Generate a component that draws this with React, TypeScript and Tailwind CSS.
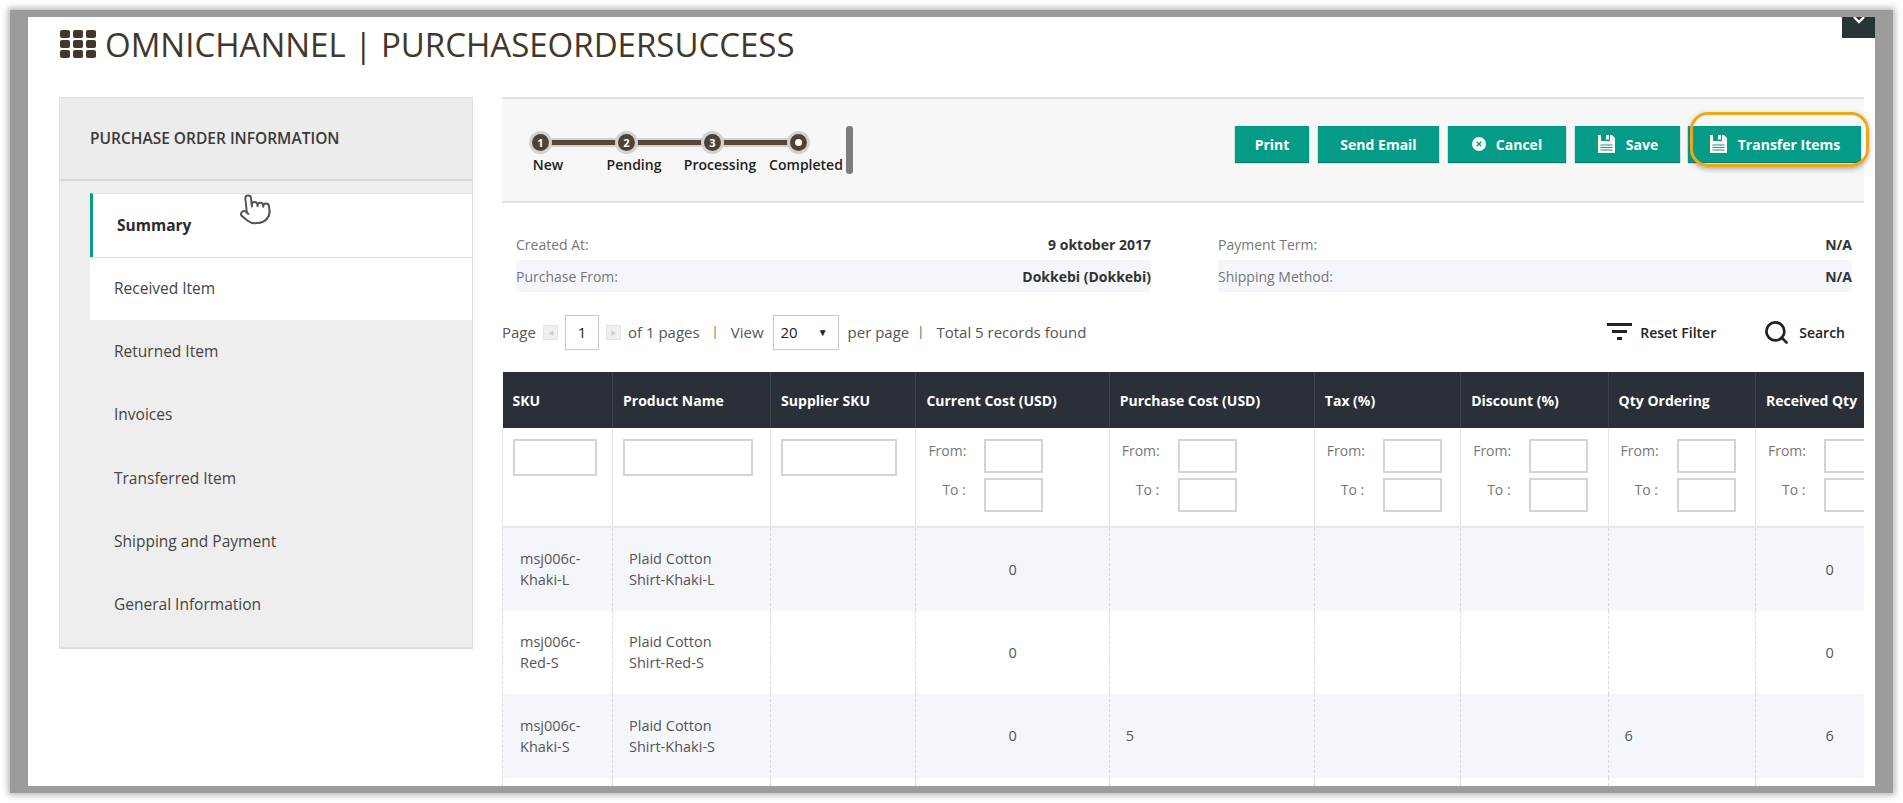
import { Pointer, Search } from 'lucide-react'

const menu = ['Received Item', 'Returned Item', 'Invoices', 'Transferred Item', 'Shipping and Payment', 'General Information']

const steps = ['New', 'Pending', 'Processing', 'Completed']

const columns = [
  { title: 'SKU', width: 103, filter: 'text', inputWidth: 'w-[84px]' },
  { title: 'Product Name', width: 148, filter: 'text', inputWidth: 'w-[130px]' },
  { title: 'Supplier SKU', width: 136, filter: 'text', inputWidth: 'w-[116px]' },
  { title: 'Current Cost (USD)', width: 181, filter: 'range' },
  { title: 'Purchase Cost (USD)', width: 192, filter: 'range' },
  { title: 'Tax (%)', width: 137, filter: 'range' },
  { title: 'Discount (%)', width: 138, filter: 'range' },
  { title: 'Qty Ordering', width: 138, filter: 'range' },
  { title: 'Received Qty', width: 139, filter: 'range' },
  { title: 'Returned Qty', width: 139, filter: 'range' },
]

const rows = [
  { sku: ['msj006c-', 'Khaki-L'], name: ['Plaid Cotton', 'Shirt-Khaki-L'], current: '0', purchase: '', qty: '', received: '0' },
  { sku: ['msj006c-', 'Red-S'], name: ['Plaid Cotton', 'Shirt-Red-S'], current: '0', purchase: '', qty: '', received: '0' },
  { sku: ['msj006c-', 'Khaki-S'], name: ['Plaid Cotton', 'Shirt-Khaki-S'], current: '0', purchase: '5', qty: '6', received: '6' },
]

function SaveIcon() {
  return (
    <svg width="19" height="20" viewBox="0 0 19 20" fill="none">
      <path d="M1 1h3v6h9V1h2l3 3v15H1z" fill="#fff" />
      <rect x="9" y="1" width="3" height="4.5" fill="#fff" />
      <path d="M3.5 11h12M3.5 13.5h12M3.5 16h12" stroke="#049c86" strokeWidth="1.2" />
    </svg>
  )
}

function CancelIcon() {
  return (
    <svg width="14" height="14" viewBox="0 0 14 14">
      <circle cx="7" cy="7" r="7" fill="#fff" />
      <path d="M4.8 4.8l4.4 4.4M9.2 4.8l-4.4 4.4" stroke="#049c86" strokeWidth="1.4" />
    </svg>
  )
}

function Btn({ children, className }: { children: React.ReactNode; className: string }) {
  return (
    <button className={`h-[36px] bg-[#049c86] text-white text-[14px] font-bold flex items-center justify-center shadow-[0_1px_1px_#0b7c6c] ${className}`}>
      {children}
    </button>
  )
}

function PageArrow({ dir }: { dir: 'left' | 'right' }) {
  return (
    <span className="w-[15px] h-[15px] bg-[#efefef] border border-[#e4e4e4] flex items-center justify-center">
      <span className={`text-[7px] leading-none text-[#cfcfcf] ${dir === 'left' ? '' : ''}`}>{dir === 'left' ? '◀' : '▶'}</span>
    </span>
  )
}

function RangeFilter() {
  return (
    <div className="grid grid-cols-[56px_59px] gap-y-[5px] pl-[12px] pt-[11px] text-[14px] text-[#777]">
      <span className="leading-[24px]">From:</span>
      <input className="w-[59px] h-[34px] border-2 border-[#d3d4d8] bg-white" readOnly />
      <span className="leading-[24px] pl-[14px] pt-[-2px]">To :</span>
      <input className="w-[59px] h-[34px] border-2 border-[#d3d4d8] bg-white" readOnly />
    </div>
  )
}

export default function App() {
  return (
    <div className="w-[1903px] h-[803px] bg-white pt-[10px] pl-[10px] overflow-hidden font-['Open_Sans',sans-serif]">
      <div className="relative w-[1883px] h-[783px] bg-white border-x-[18px] border-y-[7px] border-[#9c9c9c] shadow-[0_0_6px_2px_rgba(120,120,120,0.55)] overflow-hidden">
        <div className="absolute right-0 top-0 w-[33px] h-[21px] bg-[#263535] flex justify-center">
          <svg width="14" height="9" viewBox="0 0 14 9" fill="none">
            <path d="M2 0l5 5 5-5" stroke="#fff" strokeWidth="2.4" />
          </svg>
        </div>

        <div className="h-[80px] pl-[32px] pt-[6px] flex items-start gap-[9px]">
          <svg width="36" height="28" viewBox="0 0 36 28" className="mt-[7px]" fill="#41382b">
            <rect x="0" y="0" width="10" height="8" rx="2" />
            <rect x="13" y="0" width="10" height="8" rx="2" />
            <rect x="26" y="0" width="10" height="8" rx="2" />
            <rect x="0" y="10" width="10" height="8" rx="2" />
            <rect x="13" y="10" width="10" height="8" rx="2" />
            <rect x="26" y="10" width="10" height="8" rx="2" />
            <rect x="0" y="20" width="10" height="8" rx="2" />
            <rect x="13" y="20" width="10" height="8" rx="2" />
            <rect x="26" y="20" width="10" height="8" rx="2" />
          </svg>
          <h1 className="text-[33px] leading-[44px] text-[#41382b] font-normal whitespace-nowrap">OMNICHANNEL | PURCHASEORDERSUCCESS</h1>
        </div>

        <div className="flex pl-[31px]">
          <aside className="relative w-[414px] h-[552px] shrink-0 bg-[#eeeeee] border border-[#dcdfe4] border-b-2">
            <div className="h-[83px] bg-[#ececec] border-b-2 border-[#d6d6d6] pl-[30px] flex items-center text-[15.5px] font-semibold text-[#3a3a3a]">
              PURCHASE ORDER INFORMATION
            </div>
            <div className="h-[12px]" />
            <div className="ml-[30px]">
              <div className="h-[64px] bg-white border-l-[3px] border-[#049c86] border-t border-t-[#dcdfe4] pl-[24px] flex items-center text-[15.5px] font-bold text-[#2b2b2b]">
                Summary
              </div>
              {menu.map((item, i) => (
                <div
                  key={item}
                  className={`h-[63.2px] pl-[24px] flex items-center text-[15.5px] text-[#444] ${i === 0 ? 'bg-white border-t border-[#dcdfe4]' : ''}`}
                >
                  {item}
                </div>
              ))}
            </div>
            <Pointer size={34} strokeWidth={1.4} className="absolute left-[178px] top-[94px] text-[#555] fill-white -rotate-6" />
          </aside>

          <main className="w-[1362px] ml-[29px] shrink-0 overflow-hidden">
            <div className="h-[106px] bg-[#f7f7f7] border-y-2 border-[#e2e2e6] flex items-start">
              <div className="w-[346px] pt-[32px] pl-[3px] shrink-0 relative">
                <div className="flex items-center pl-[27px] h-[22px]">
                  {steps.map((s, i) => (
                    <div key={s} className="flex items-center">
                      <span className="w-[17px] h-[17px] rounded-full bg-[#4f4238] ring-[3px] ring-[#d2d2d2] text-white text-[11px] font-bold leading-none flex items-center justify-center z-10">
                        {i < 3 ? i + 1 : <span className="w-[7px] h-[7px] rounded-full bg-white" />}
                      </span>
                      {i < 3 && <span className="w-[69px] h-[5px] bg-[#52463d] shadow-[0_0_0_2px_#d2d2d2]" />}
                    </div>
                  ))}
                </div>
                <div className="grid grid-cols-[86px_86px_86px_86px] text-[14px] font-semibold text-[#222] text-center whitespace-nowrap mt-[1px]">
                  {steps.map((s) => (
                    <span key={s}>{s}</span>
                  ))}
                </div>
                <span className="absolute left-[344px] top-[27px] w-[7px] h-[48px] rounded-[3px] bg-[#7d7d7d]" />
              </div>

              <div className="flex-1 flex justify-end items-start gap-[9px] pt-[27px] pr-[3px] relative">
                <Btn className="w-[74px]">Print</Btn>
                <Btn className="w-[121px]">Send Email</Btn>
                <Btn className="w-[118px] gap-[10px]">
                  <CancelIcon />
                  Cancel
                </Btn>
                <Btn className="w-[105px] gap-[10px]">
                  <SaveIcon />
                  Save
                </Btn>
                <Btn className="w-[173px] gap-[10px] -ml-[1px]">
                  <SaveIcon />
                  Transfer Items
                </Btn>
              </div>
            </div>

            <div className="h-[25px]" />
            <div className="grid grid-cols-[635px_634px] gap-x-[67px] pl-[14px] text-[14px]">
              {[
                [['Created At:', '9 oktober 2017'], ['Payment Term:', 'N/A']],
                [['Purchase From:', 'Dokkebi (Dokkebi)'], ['Shipping Method:', 'N/A']],
              ].flatMap((pair, r) =>
                pair.map(([label, value]) => (
                  <div key={label} className={`h-[32px] flex items-center justify-between ${r === 1 ? 'bg-[#f4f6fb]' : ''}`}>
                    <span className="text-[#777]">{label}</span>
                    <span className="font-bold text-[#333]">{value}</span>
                  </div>
                )),
              )}
            </div>

            <div className="h-[80px] flex items-center text-[15px] text-[#555] pt-[-2px]">
              <span>Page</span>
              <span className="ml-[7px]"><PageArrow dir="left" /></span>
              <input readOnly value="1" className="ml-[7px] w-[34px] h-[35px] border border-[#c9c9cf] text-center text-[15px] text-[#222]" />
              <span className="ml-[7px]"><PageArrow dir="right" /></span>
              <span className="ml-[7px]">of 1 pages</span>
              <span className="ml-[12px] text-[#b5533a] text-[13px]">|</span>
              <span className="ml-[12px]">View</span>
              <span className="ml-[9px] relative">
                <select className="appearance-none w-[66px] h-[35px] border border-[#c9c9cf] pl-[7px] text-[15px] text-[#222] bg-white">
                  <option>20</option>
                </select>
                <span className="absolute right-[11px] top-[10px] text-[10px] text-[#222]">▼</span>
              </span>
              <span className="ml-[9px]">per page</span>
              <span className="ml-[8px] text-[13px]">|</span>
              <span className="ml-[12px]">Total 5 records found</span>
              <div className="ml-auto flex items-center text-[14px] font-semibold text-[#222] pr-[19px]">
                <svg width="25" height="20" viewBox="0 0 25 20" fill="#222">
                  <rect x="0" y="1" width="25" height="3" />
                  <rect x="5" y="8" width="15" height="3" />
                  <rect x="10" y="15" width="5" height="3" />
                </svg>
                <span className="ml-[8px]">Reset Filter</span>
                <Search size={27} strokeWidth={2.4} className="ml-[47px] text-[#222]" />
                <span className="ml-[9px]">Search</span>
              </div>
            </div>

            <div className="overflow-hidden">
              <table className="table-fixed border-collapse w-[1551px] text-[14.5px] text-[#555]">
                <colgroup>
                  {columns.map((c) => (
                    <col key={c.title} style={{ width: c.width }} />
                  ))}
                </colgroup>
                <thead>
                  <tr className="h-[56px] bg-[#2b2f38] text-white text-[14px] font-bold">
                    {columns.map((c) => (
                      <th key={c.title} className="text-left pl-[10px] border-r border-[#3f434c] whitespace-nowrap">
                        {c.title}
                      </th>
                    ))}
                  </tr>
                  <tr className="h-[99px] border-b-2 border-[#e8e8e8]">
                    {columns.map((c, i) => (
                      <td key={c.title} className={`align-top border-r border-[#e6e6e9] ${i === 0 ? 'border-l' : ''}`}>
                        {c.filter === 'text' ? (
                          <div className="pl-[10px] pt-[11px]">
                            <input readOnly className={`${c.inputWidth} h-[37px] border-2 border-[#d3d4d8] bg-white`} />
                          </div>
                        ) : (
                          <RangeFilter />
                        )}
                      </td>
                    ))}
                  </tr>
                </thead>
                <tbody>
                  {[...rows, null].map((row, r) => (
                    <tr key={r} className={`h-[83.5px] ${r % 2 === 0 ? 'bg-[#f4f6fb]' : 'bg-white'} leading-[21px]`}>
                      {columns.map((c, i) => {
                        let content = null
                        let cls = ''
                        if (row) {
                          if (i === 0) {
                            content = row.sku.map((l) => <div key={l}>{l}</div>)
                            cls = 'pl-[17px]'
                          } else if (i === 1) {
                            content = row.name.map((l) => <div key={l}>{l}</div>)
                            cls = 'pl-[16px]'
                          } else if (i === 3) {
                            content = row.current
                            cls = 'text-center'
                          } else if (i === 4) {
                            content = row.purchase
                            cls = 'pl-[16px]'
                          } else if (i === 7) {
                            content = row.qty
                            cls = 'pl-[16px]'
                          } else if (i === 8) {
                            content = row.received
                            cls = 'text-center'
                          }
                        }
                        return (
                          <td key={c.title} className={`border-r border-dashed border-[#d8dae0] ${i === 0 ? 'border-l border-l-solid' : ''} ${cls}`}>
                            {content}
                          </td>
                        )
                      })}
                    </tr>
                  ))}
                </tbody>
              </table>
            </div>
          </main>
        </div>

        <div className="absolute left-[1662px] top-[95px] w-[179px] h-[55px] rounded-[18px] border-[3px] border-[#eea71a] shadow-[0_2px_5px_rgba(90,90,90,0.5)]" />
      </div>
    </div>
  )
}
